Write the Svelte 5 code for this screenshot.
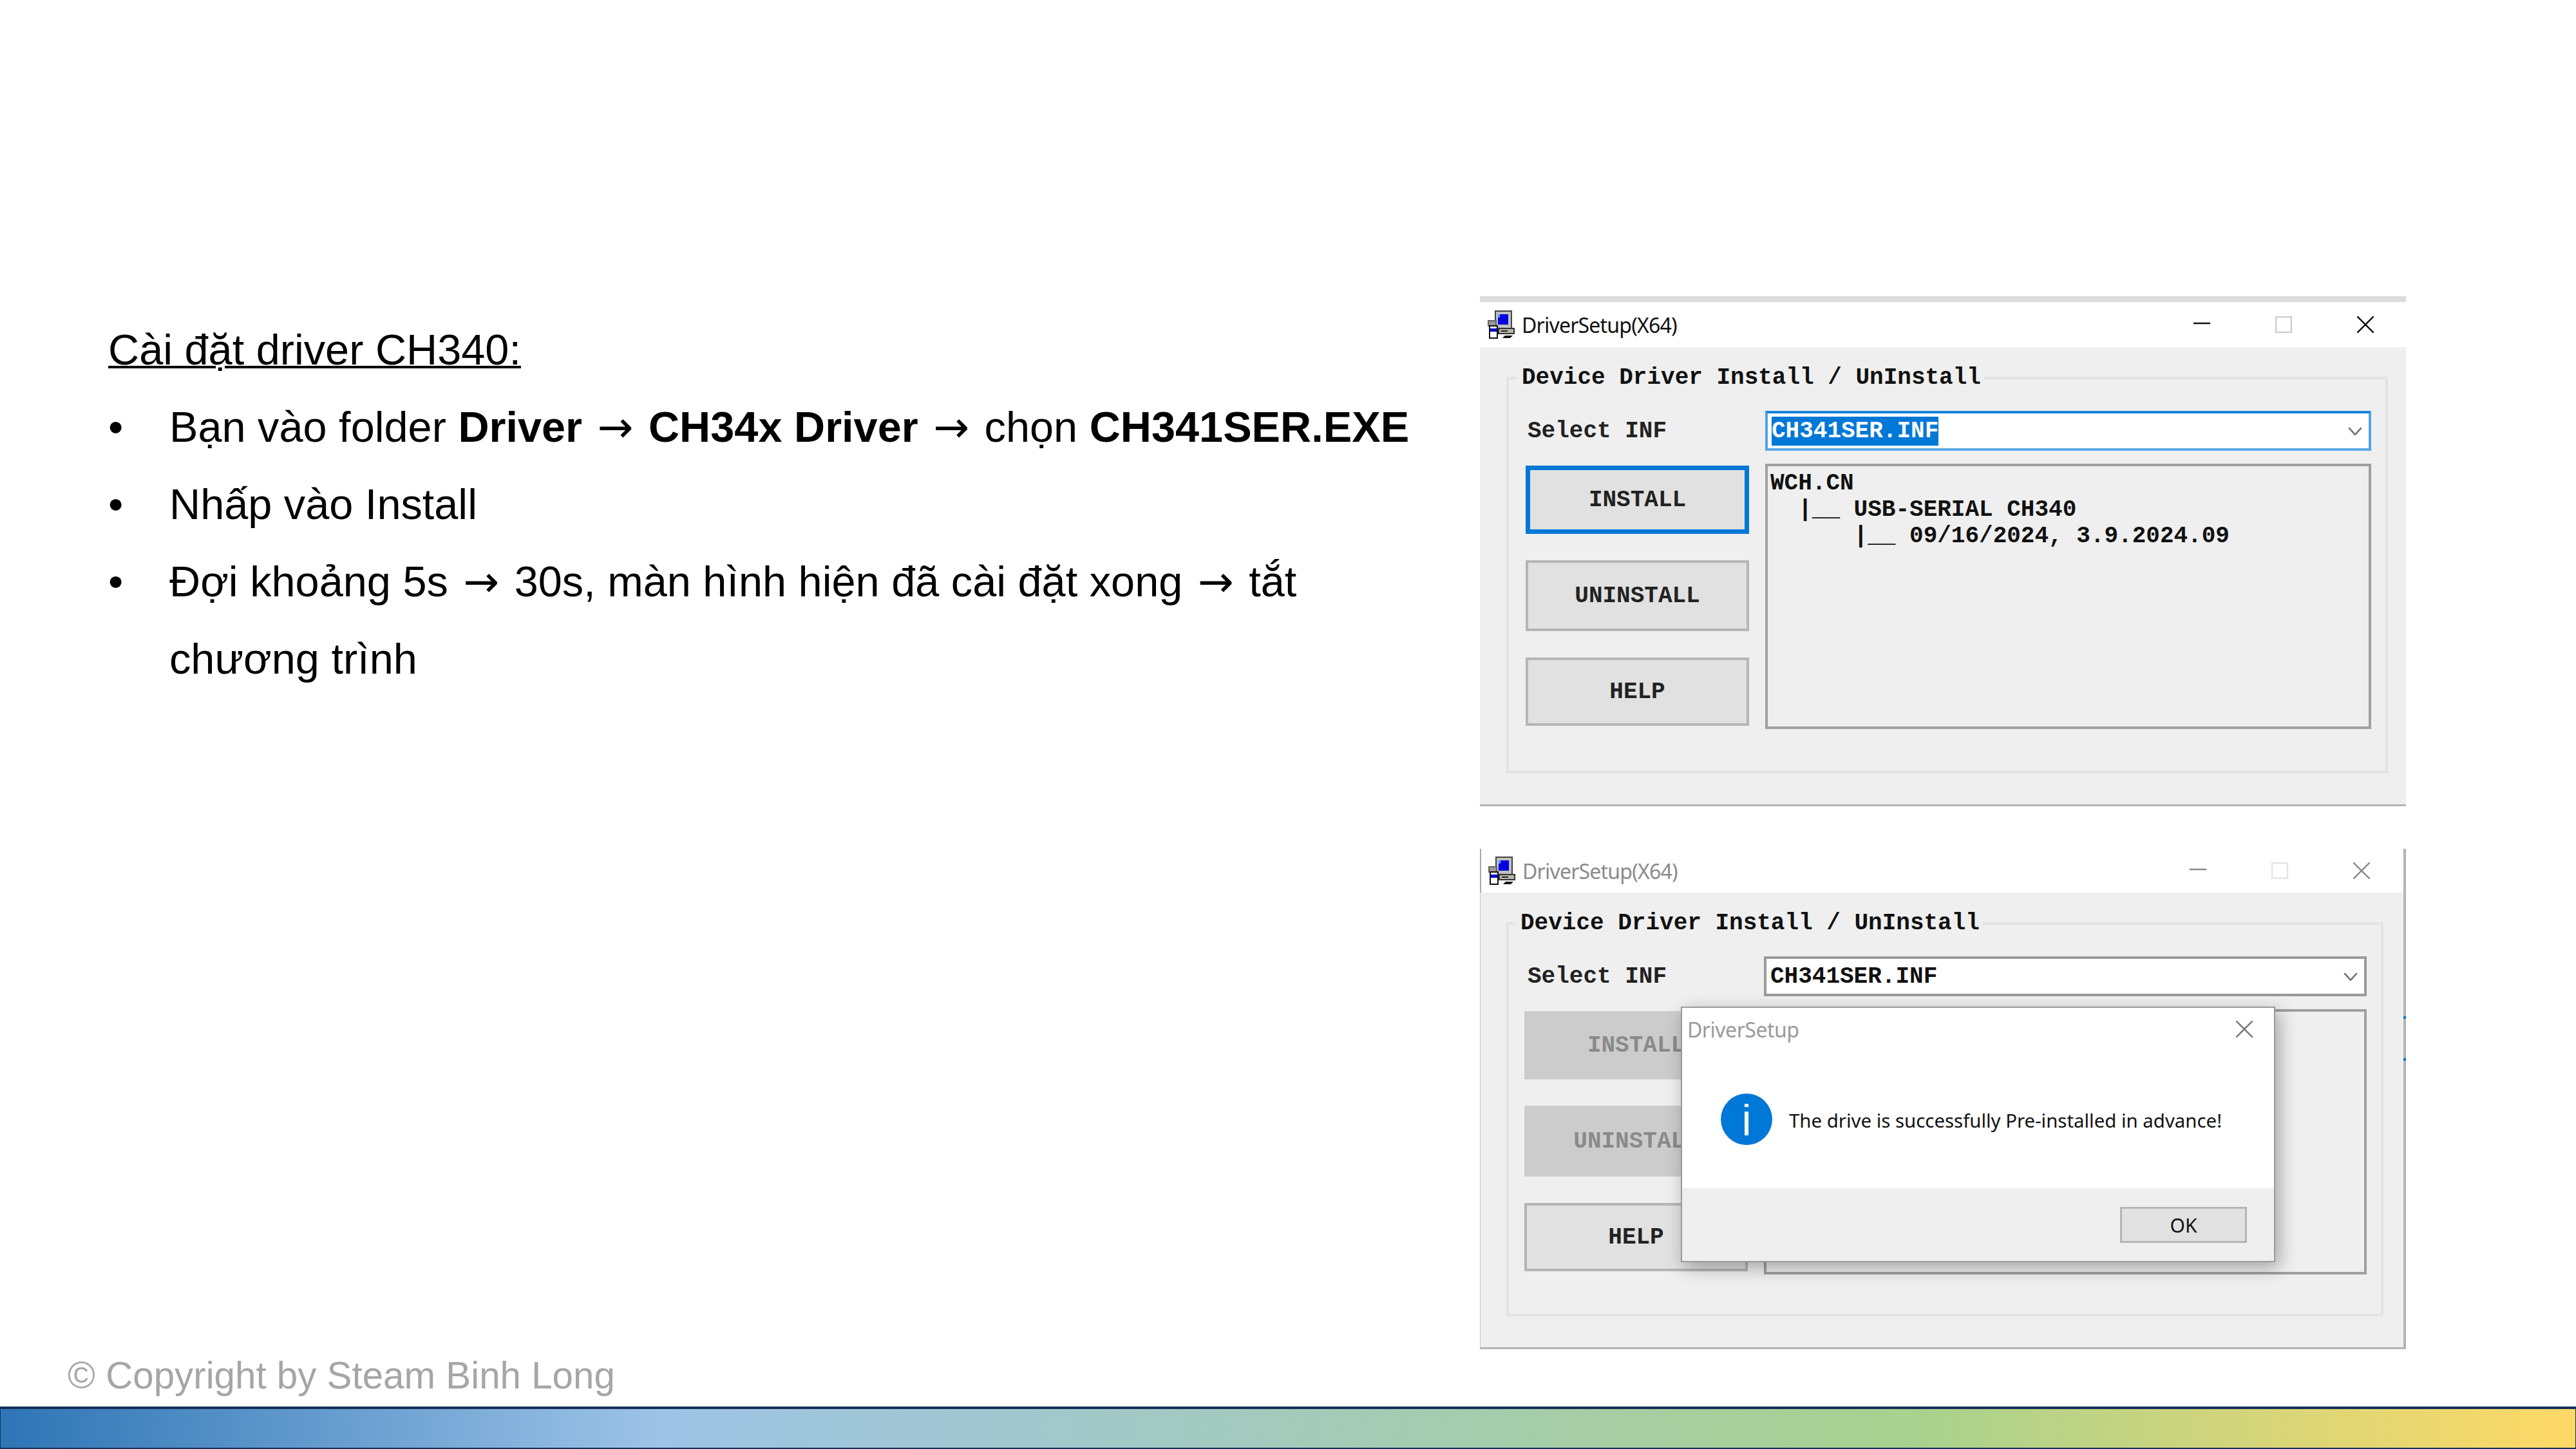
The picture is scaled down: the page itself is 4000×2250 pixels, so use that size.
<script>
	const windows = [
		{ focused: true, tree: true },
		{ focused: false, tree: false }
	]
</script>

{#snippet appIcon()}
	<svg class="app-icon" viewBox="0 0 44 44" aria-hidden="true">
		<path d="M13 1h25v27H13z" fill="#c0c0c0" stroke="#444" stroke-width="2" />
		<path d="M17 6h16v16H17z" fill="#0000e0" />
		<path d="M17 6h3v5h-3z" fill="#5aa0ff" />
		<path d="M18 28h24v8H18z" fill="#b8b8a8" stroke="#333" stroke-width="2" />
		<path d="M22 31h10v2H22z" fill="#222" />
		<path d="M2 16h12v8H2z" fill="#9a9a9a" stroke="#666" stroke-width="2" />
		<path d="M4 24h12v19H4z" fill="#fff" stroke="#111" stroke-width="2" />
		<path d="M5 28h10v5H5z" fill="#0000d0" />
		<path d="M24 43l4-4h12l-4 4z" fill="#111" />
	</svg>
{/snippet}

{#snippet driverWindow(win)}
	<section class="window" class:focused={win.focused} class:blurred={!win.focused}>
		<header class="titlebar">
			{@render appIcon()}
			<span class="title">DriverSetup(X64)</span>
			<div class="controls">
				<svg viewBox="0 0 26 26"><path d="M0 11h26" /></svg>
				<svg viewBox="0 0 26 26"><path class="max" d="M1 1h24v24H1z" /></svg>
				<svg viewBox="0 0 26 26"><path d="M0 0l26 26M26 0L0 26" /></svg>
			</div>
		</header>
		<div class="body">
			<fieldset class="group">
				<legend>Device Driver Install / UnInstall</legend>
				<div class="select-row">
					<span class="label">Select INF</span>
					<div class="combo">
						<span class="value">CH341SER.INF</span>
						<svg viewBox="0 0 20 12"><path d="M1 1l9 10 9-10" /></svg>
					</div>
				</div>
				<div class="main-row">
					<div class="buttons">
						<button class="install">INSTALL</button>
						<button class="uninstall">UNINSTALL</button>
						<button class="help">HELP</button>
					</div>
					<pre class="tree">{#if win.tree}WCH.CN
  |__ USB-SERIAL CH340
      |__ 09/16/2024, 3.9.2024.09{/if}</pre>
				</div>
			</fieldset>
		</div>
		{#if !win.focused}
			<div class="dialog">
				<div class="dialog-head">
					<span>DriverSetup</span>
					<svg viewBox="0 0 26 26"><path d="M0 0l26 26M26 0L0 26" /></svg>
				</div>
				<div class="dialog-msg">
					<svg class="info" viewBox="0 0 80 80">
						<circle cx="40" cy="40" r="40" fill="#0078d7" />
						<path d="M37 16h6v5h-6zM37 28h6v37h-6z" fill="#fff" />
					</svg>
					<p>The drive is successfully Pre-installed in advance!</p>
				</div>
				<div class="dialog-foot">
					<button class="ok">OK</button>
				</div>
			</div>
		{/if}
	</section>
{/snippet}

<div class="slide">
	<main class="content">
		<div class="notes">
			<h1>Cài đặt driver CH340:</h1>
			<ul>
				<li><span>Bạn vào folder <b>Driver</b> <i>→</i> <b>CH34x Driver</b> <i>→</i> chọn <b>CH341SER.EXE</b></span></li>
				<li><span>Nhấp vào Install</span></li>
				<li><span>Đợi khoảng 5s <i>→</i> 30s, màn hình hiện đã cài đặt xong <i>→</i> tắt chương trình</span></li>
			</ul>
			<p class="copyright">© Copyright by Steam Binh Long</p>
		</div>
		<div class="shots">
			{#each windows as win}
				{@render driverWindow(win)}
			{/each}
		</div>
	</main>
	<footer class="bar"></footer>
</div>

<style>
	:global(body) {
		margin: 0;
		background: #fff;
	}

	.slide {
		width: 4000px;
		height: 2250px;
		display: flex;
		flex-direction: column;
		overflow: hidden;
		font-family: "Liberation Sans", Arial, sans-serif;
	}

	.content {
		flex: 1;
		display: flex;
		padding-top: 460px;
	}

	.notes {
		width: 2298px;
		display: flex;
		flex-direction: column;
		padding: 23px 0 0 168px;
		box-sizing: border-box;
	}

	h1 {
		margin: 0;
		font-size: 66.67px;
		font-weight: 400;
		line-height: 120px;
		text-decoration: underline;
		text-decoration-thickness: 4px;
		color: #000;
	}

	ul {
		margin: 0;
		padding: 0;
		width: 2030px;
		list-style: none;
		font-size: 66.67px;
		line-height: 120px;
		color: #000;
	}

	li {
		display: grid;
		grid-template-columns: 95px 1fr;
	}

	li::before {
		content: "•";
	}

	li i {
		font-family: "DejaVu Sans", sans-serif;
		font-style: normal;
		line-height: 0;
		padding: 0 5px;
	}

	.copyright {
		margin: auto 0 0 -63px;
		font-size: 58.3px;
		line-height: 74px;
		color: #a6a6a6;
		padding-bottom: 11px;
	}

	.shots {
		width: 1702px;
		display: flex;
		flex-direction: column;
		gap: 66px;
	}

	.window {
		position: relative;
		width: 1438px;
		background: #efefef;
		display: flex;
		flex-direction: column;
		box-sizing: border-box;
		border-bottom: 3px solid #b4b4b4;
	}

	.window.focused {
		height: 792px;
		border-top: 9px solid #dcdcdc;
	}

	.window.blurred {
		height: 777px;
		border-left: 1px solid #c8c8c8;
		border-right: 4px solid #b4b4b4;
	}

	/* little leftovers of whatever was behind the window when it was captured */
	.window.blurred::after {
		content: "";
		position: absolute;
		top: 0;
		bottom: 0;
		right: -4px;
		width: 4px;
		background: linear-gradient(to bottom,
			#b4b4b4 0 260px, #0078d7 260px 264px, #b4b4b4 264px 325px,
			#0078d7 325px 329px, #b4b4b4 329px 100%);
	}

	.titlebar {
		height: 70px;
		background: #fff;
		display: flex;
		align-items: center;
		padding: 0 50px 0 11px;
	}

	.blurred .titlebar {
		height: 68px;
		padding: 0 52px 0 10px;
		border-left: 2px solid #a8a8a8;
		margin-left: -1px;
	}

	.app-icon {
		width: 44px;
		height: 44px;
		margin-right: 10px;
	}

	.title {
		font-family: "Noto Sans", sans-serif;
		font-size: 32px;
		letter-spacing: -.8px;
		color: #111;
	}

	.blurred .title {
		color: #8b8b8b;
	}

	.controls {
		margin-left: auto;
		display: flex;
		gap: 101px;
	}

	.controls svg {
		width: 26px;
		height: 26px;
	}

	.controls path,
	.dialog-head path {
		fill: none;
		stroke: #111;
		stroke-width: 2.5;
	}

	.controls path.max {
		stroke: #ccc;
	}

	.blurred .controls path {
		stroke: #8b8b8b;
	}

	.blurred .controls path.max {
		stroke: #e4e4e4;
	}

	.body {
		flex: 1;
		padding: 28px 28px 48px 41px;
		display: flex;
	}

	.blurred .body {
		padding: 28px 31px 48px 40px;
	}

	.group {
		flex: 1;
		margin: 0;
		padding: 31px 22px 0 26px;
		border: 4px solid #e3e3e3;
		min-width: 0;
	}

	.blurred .group {
		padding-left: 24px;
	}

	legend {
		padding: 0 5px 0 8px;
		margin-left: -14px;
		font-family: "Liberation Mono", monospace;
		font-weight: 700;
		font-size: 36px;
		line-height: 40px;
		color: #111;
	}

	.select-row {
		display: flex;
		align-items: center;
		height: 62px;
	}

	.label {
		flex: 0 0 372px;
		box-sizing: border-box;
		padding-left: 3px;
		font-family: "Liberation Mono", monospace;
		font-weight: 700;
		font-size: 36px;
		color: #222;
	}

	.blurred .label {
		padding-left: 5px;
	}

	.combo {
		flex: 1;
		height: 100%;
		box-sizing: border-box;
		background: #fff;
		border: 4px solid #9a9a9a;
		display: flex;
		align-items: center;
		justify-content: space-between;
		padding: 0 10px 0 6px;
		font-family: "Liberation Mono", monospace;
		font-weight: 700;
		font-size: 36px;
		color: #111;
	}

	.focused .combo {
		border-color: #1883dd #4ea3e8 #5ba9e9 #4ea3e8;
	}

	.focused .value {
		background: #0078d7;
		color: #fff;
		padding: 2px 0;
	}

	.combo svg {
		width: 22px;
		height: 13px;
	}

	.combo path {
		fill: none;
		stroke: #777;
		stroke-width: 2.5;
	}

	.main-row {
		display: flex;
		gap: 25px;
		margin-top: 20px;
	}

	.buttons {
		width: 347px;
		display: flex;
		flex-direction: column;
		gap: 41px;
		padding-top: 3px;
	}

	button {
		height: 106px;
		box-sizing: border-box;
		background: #e1e1e1;
		border: 4px solid #b5b5b5;
		font-family: "Liberation Mono", monospace;
		font-weight: 700;
		font-size: 36px;
		color: #222;
		padding: 0;
	}

	.uninstall {
		height: 110px;
	}

	.focused .install {
		border: 7px solid #0078d7;
	}

	.blurred .install,
	.blurred .uninstall {
		background: #cccccc;
		border-color: #cccccc;
		color: #8a8a8a;
	}

	.tree {
		flex: 1;
		margin: 0;
		height: 412px;
		box-sizing: border-box;
		border: 4px solid #a0a0a0;
		padding: 6px 4px;
		font-family: "Liberation Mono", monospace;
		font-weight: 700;
		font-size: 36px;
		line-height: 41px;
		color: #111;
		overflow: hidden;
	}

	.dialog {
		position: absolute;
		left: 311px;
		top: 245px;
		width: 923px;
		height: 397px;
		box-sizing: border-box;
		background: #fff;
		border: 2px solid #9a9a9a;
		box-shadow: 6px 8px 26px rgba(0, 0, 0, .32);
		display: flex;
		flex-direction: column;
	}

	.dialog-head {
		display: flex;
		align-items: center;
		justify-content: space-between;
		height: 66px;
		padding: 0 33px 0 8px;
		font-family: "Noto Sans", sans-serif;
		font-size: 32px;
		letter-spacing: -.5px;
		color: #9a9a9a;
	}

	.dialog-head svg {
		width: 26px;
		height: 26px;
	}

	.dialog-head path {
		stroke: #777;
	}

	.dialog-msg {
		flex: 1;
		display: flex;
		align-items: center;
		gap: 26px;
		padding-left: 60px;
	}

	.info {
		width: 80px;
		height: 80px;
		flex-shrink: 0;
	}

	.dialog-msg p {
		margin: 3px 0 0;
		font-family: "Noto Sans", sans-serif;
		font-size: 29.4px;
		color: #111;
	}

	.dialog-foot {
		height: 113px;
		background: #efefef;
		display: flex;
		justify-content: flex-end;
		align-items: flex-start;
		padding: 29px 42px 0 0;
		box-sizing: border-box;
	}

	.ok {
		width: 197px;
		height: 56px;
		font-family: "Noto Sans", sans-serif;
		font-weight: 400;
		font-size: 30px;
		border-width: 3px;
		color: #111;
	}

	.bar {
		height: 66px;
		box-sizing: border-box;
		border: 1px solid #17305a;
		border-width: 4px 1px 2px;
		background: linear-gradient(90deg, #2e75b6 0%, #9dc3e6 25.5%, #a9d18e 74.6%, #ffd966 100%);
	}
</style>
